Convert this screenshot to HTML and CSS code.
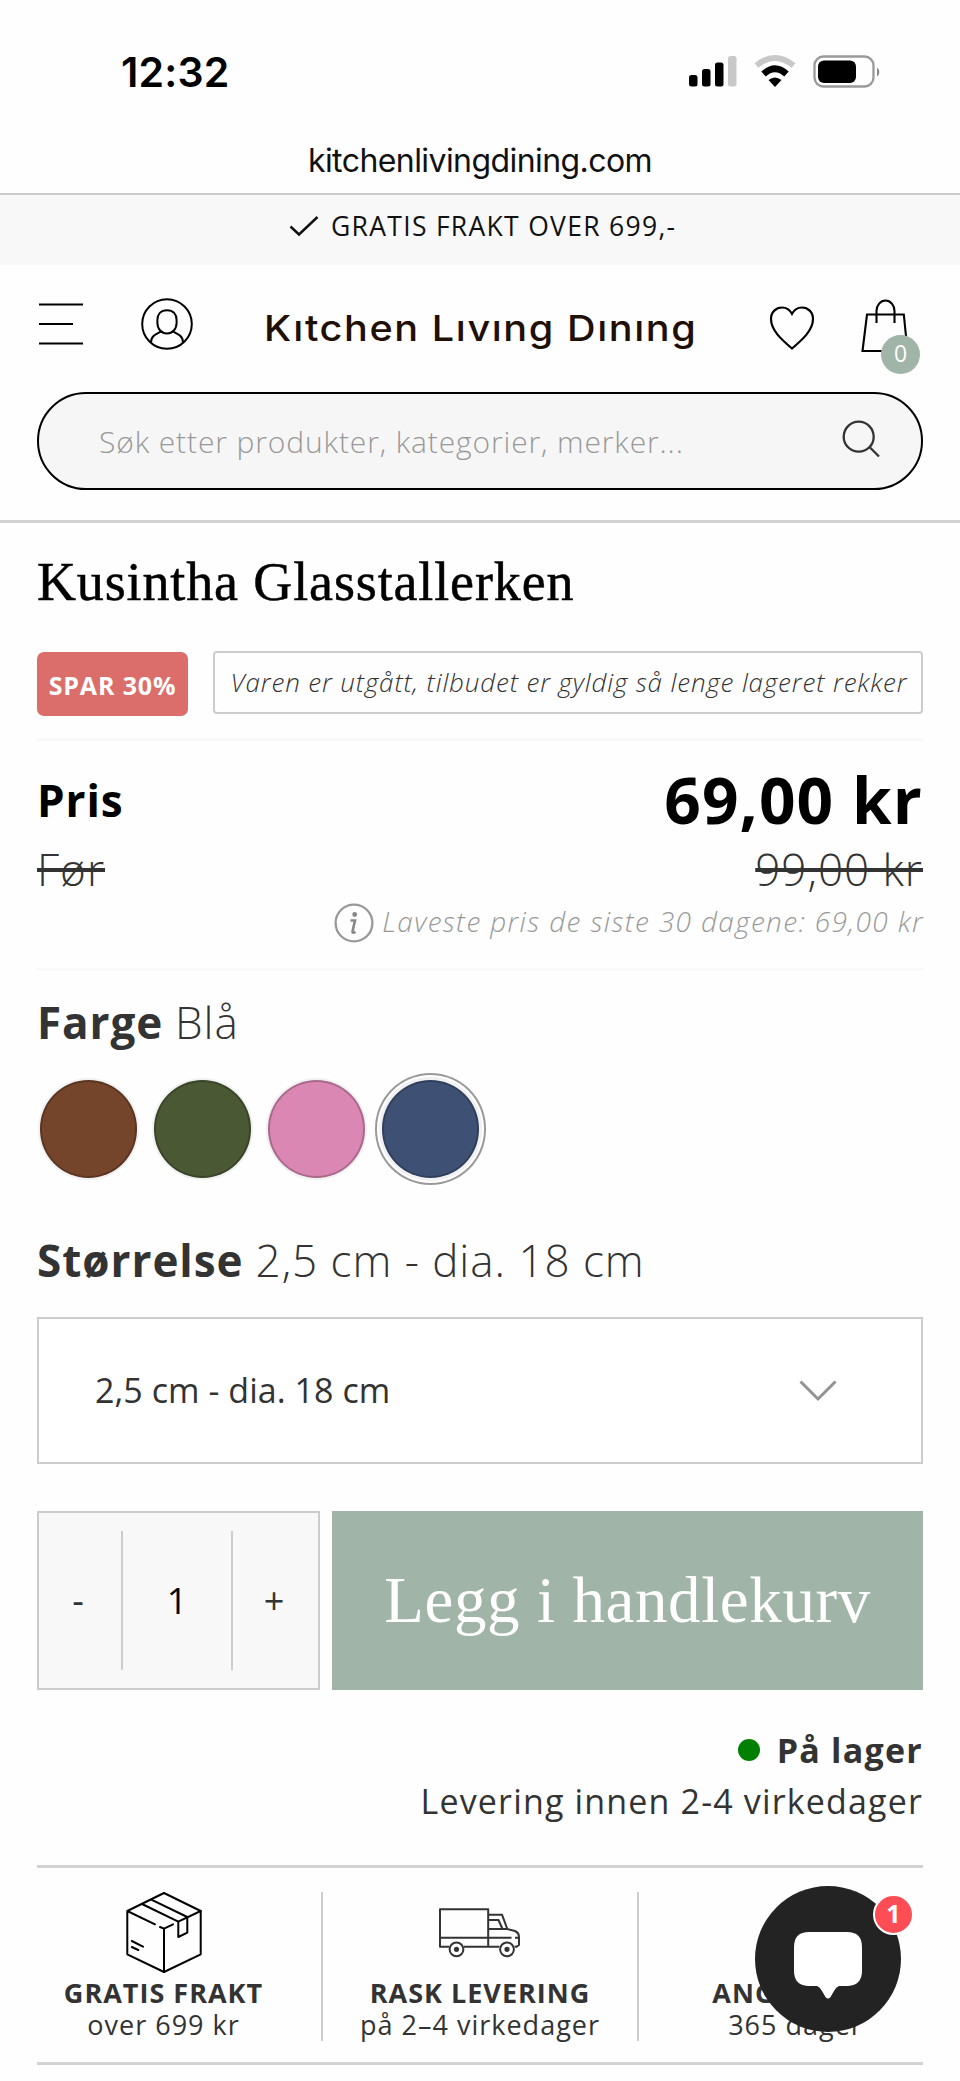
FILE: index.html
```html
<!DOCTYPE html>
<html lang="no">
<head>
<meta charset="utf-8">
<title>Kusintha Glasstallerken</title>
<link rel="stylesheet" href="styles.css">
</head>
<body>
<div class="status-bar">
  <span class="clock">12:32</span>
  <svg class="status-icons" width="204" height="36" viewBox="0 0 204 36">
    <rect x="0" y="18" width="8.5" height="11.5" rx="2.5"/>
    <rect x="13" y="12" width="8.5" height="17.5" rx="2.5"/>
    <rect x="26" y="5.5" width="8.5" height="24" rx="2.5"/>
    <rect x="39" y="-1" width="8.5" height="30.5" rx="2.5" fill="#c8c8c8"/>
    <path d="M67.500 8.500Q86 -6.500 104.500 8.500" fill="none" stroke="#c8c8c8" stroke-width="6"/>
    <path d="M74.500 17Q86 6.500 97.500 17" fill="none" stroke="#000" stroke-width="6.500"/>
    <path d="M86 30L79.500 23Q86 18 92.500 23Z"/>
    <rect x="125.5" y="-.5" width="59" height="30" rx="9" fill="none" stroke="#999" stroke-width="2.3"/>
    <rect x="129" y="3.500" width="38" height="22.500" rx="6"/>
    <path d="M188 10.500a5.500 5.500 0 0 1 0 9z" fill="#888"/>
  </svg>
</div>
<div class="url-bar">kitchenlivingdining.com</div>
<div class="promo">
  <svg width="30" height="22" viewBox="0 0 30 22"><path d="M1.500 11.500L10 19.500L28.500 2" fill="none" stroke="#111" stroke-width="2.500"/></svg>
  <span class="promo-text">GRATIS FRAKT OVER 699,-</span>
</div>

<header class="header">
  <div class="nav">
    <svg class="menu" width="44" height="42" viewBox="0 0 44 42"><path d="M0 1.500H44M0 21H34M0 40.500H44" stroke="#000" stroke-width="2.200"/></svg>
    <svg class="user" width="52" height="52" viewBox="0 0 52 52" fill="none" stroke="#000" stroke-width="2">
      <circle cx="26" cy="26" r="24.800"/>
      <path d="M26 12.200c-6.200 0-9.600 4-9.600 9.800v3c0 6 4.200 10.500 9.600 10.500s9.600-4.500 9.600-10.500v-3c0-5.800-3.400-9.800-9.600-9.800z"/>
      <path d="M10 44.500c0-6.500 5-8.500 10.500-11.300M42 44.500c0-6.500-5-8.500-10.500-11.300"/>
    </svg>
    <span class="logo">Kıtchen Lıvıng Dınıng</span>
    <svg class="heart" width="46" height="46" viewBox="0 0 46 46"><path d="M23 43.500C13 35 2 25.500 2 14C2 7 7 2.500 13 2.500C17.500 2.500 21 5 23 8.800C25 5 28.500 2.500 33 2.500C39 2.500 44 7 44 14C44 25.500 33 35 23 43.500Z" fill="none" stroke="#000" stroke-width="2.200"/></svg>
    <span class="bag">
      <svg width="48" height="54" viewBox="0 0 48 54" fill="none" stroke="#000" stroke-width="2.100"><path d="M6 15.500H42.800L46.500 52H1.500Z"/><path d="M15.500 24V12a9 10.500 0 0 1 18 0v12"/></svg>
      <span class="count">0</span>
    </span>
  </div>
  <div class="search">
    <span class="search-text">Søk etter produkter, kategorier, merker...</span>
    <svg width="38" height="38" viewBox="0 0 38 38" fill="none" stroke="#333" stroke-width="2.300"><circle cx="16.700" cy="16.700" r="15"/><path d="M27.500 27L37 36.500"/></svg>
  </div>
</header>

<main class="product">
  <h1 class="title">Kusintha Glasstallerken</h1>
  <div class="tags">
    <span class="save">SPAR 30%</span>
    <span class="notice">Varen er utgått, tilbudet er gyldig så lenge lageret rekker</span>
  </div>
  <section class="prices">
    <div class="row now"><b class="now-label">Pris</b><b class="now-value">69,00 kr</b></div>
    <div class="row before"><span class="strike">Før</span><span class="strike">99,00 kr</span></div>
    <div class="lowest">
      <svg width="40" height="40" viewBox="0 0 40 40"><circle cx="20" cy="20" r="18.400" fill="none" stroke="#999" stroke-width="2.300"/><circle cx="20.700" cy="11.500" r="2.400" fill="#888"/><path d="M16.500 17.500H21L18.500 28.500Q18.300 30.500 21.500 28.800" fill="none" stroke="#888" stroke-width="2.600"/></svg>
      <span class="lowest-text">Laveste pris de siste 30 dagene: 69,00 kr</span>
    </div>
  </section>
  <div class="option color-option"><b>Farge</b><span>Blå</span></div>
  <div class="swatches">
    <span class="swatch brown"></span><span class="swatch green"></span><span class="swatch pink"></span><span class="swatch blue selected"></span>
  </div>
  <div class="option size-option"><b>Størrelse</b><span>2,5 cm - dia. 18 cm</span></div>
  <div class="select">
    <span class="select-text">2,5 cm - dia. 18 cm</span>
    <svg width="38" height="22" viewBox="0 0 38 22"><path d="M1.500 1.500L19 19L36.500 1.500" fill="none" stroke="#929292" stroke-width="3"/></svg>
  </div>
  <div class="buy">
    <div class="qty"><span class="minus">-</span><span class="qty-value">1</span><span class="plus">+</span></div>
    <div class="add">Legg i handlekurv</div>
  </div>
  <div class="stock"><i class="dot"></i><b class="stock-text">På lager</b></div>
  <div class="delivery">Levering innen 2-4 virkedager</div>

  <section class="usps">
    <div class="usp">
      <svg width="80" height="84" viewBox="0 0 80 84" fill="none" stroke="#000" stroke-width="2" stroke-linecap="round" stroke-linejoin="round">
        <path d="M31 33.300L3.300 20L40 2L76.700 20V63.300L40 81L3.300 63.300V20"/>
        <path d="M36 36L40 37.700L49 33.300M40 37.700V81"/>
        <path d="M18 13L54.300 30.700V46L63.300 41.700V26L27.300 8.700M54.300 30.700L76.700 20"/>
        <path d="M7.800 50L19 55.700M7.800 56L14.300 59"/>
      </svg>
      <b>GRATIS FRAKT</b><span>over 699 kr</span>
    </div>
    <div class="usp">
      <svg width="84" height="84" viewBox="0 0 84 84" fill="none" stroke="#333" stroke-width="2" stroke-linejoin="round">
        <path d="M11 55.700H2V18.300H50.200V55.700M26 55.700H61.500M50.200 23.700H64L69.300 38L77 40Q81 42 81 46V54L78.500 55.700H76.500M50.200 29H60.500L64.500 38M50.200 38H69.300M2 46.700H73.500M77 46.700H81"/>
        <circle cx="18.500" cy="58.300" r="6.900"/><circle cx="18.500" cy="58.300" r="1.600" fill="#333"/>
        <circle cx="69" cy="58.300" r="6.900"/><circle cx="69" cy="58.300" r="1.600" fill="#333"/>
      </svg>
      <b>RASK LEVERING</b><span>på 2–4 virkedager</span>
    </div>
    <div class="usp">
      <div class="usp-blank"></div>
      <b>ANGRERETT</b><span>365 dager</span>
    </div>
  </section>
</main>

<div class="chat">
  <svg width="146" height="146" viewBox="0 0 146 146"><circle cx="73" cy="73" r="73" fill="#232323"/><path d="M54 46H92Q107 46 107 61V85Q107 99 93 100H84Q81 101 79 105L75.500 111Q73 114 70.500 111L67 105Q65 101 62 100H53Q39 99 39 85V61Q39 46 54 46Z" fill="#fff"/></svg>
  <span class="chat-count">1</span>
</div>
</body>
</html>
```
FILE: styles.css
```css
* { box-sizing: border-box; }
body {
  margin: 0;
  width: 960px;
  height: 2081px;
  position: relative;
  overflow: hidden;
  background: #fefefe;
  color: #333;
  font-family: "Open Sans", sans-serif;
  white-space: nowrap;
}
svg { display: block; flex: none; overflow: visible; }

.status-bar {
  height: 131px;
  padding: 13px 67px 0 121px;
  display: flex;
  align-items: center;
  justify-content: space-between;
  font-family: Inter, sans-serif;
  color: #000;
}
.clock { font-size: 41px; font-weight: 600; letter-spacing: 0.2px; }
.status-icons { margin-top: 5px; }
.url-bar {
  height: 62px;
  line-height: 60px;
  text-align: center;
  font-family: Inter, sans-serif;
  font-size: 32px;
  color: #111;
  letter-spacing: -0.57px;
}
.promo {
  height: 72px;
  padding: 0 0 8px 289px;
  display: flex;
  align-items: center;
  background: #f8f8f8;
  border-top: 2px solid #ccc;
  color: #111;
}
.promo-text { margin-left: 12px; font-size: 26.5px; letter-spacing: 1.3px; }

.header { height: 258px; border-bottom: 3px solid #d2d2d2; padding: 0 37px; }
.nav { height: 127px; display: flex; align-items: flex-start; padding-left: 2px; }
.menu { margin-top: 38px; }
.user { margin: 33px 0 0 58px; }
.logo {
  width: 440px;
  margin: 43px 0 0 71px;
  line-height: 40px;
  font-family: Inter, sans-serif;
  font-weight: 500;
  font-size: 36px;
  letter-spacing: 1.45px;
  color: #1f0f05;
  transform: scaleX(1.1);
  transform-origin: left;
}
.heart { margin: 40px 0 0 65px; }
.bag { position: relative; margin: 34px 0 0 46px; }
.count {
  position: absolute;
  left: 20px;
  top: 36px;
  width: 39px;
  height: 39px;
  border-radius: 50%;
  background: #a0b4a7;
  color: #fff;
  font-size: 23px;
  line-height: 37px;
  text-align: center;
}
.search {
  height: 98px;
  padding: 0 41px 0 60px;
  display: flex;
  align-items: center;
  justify-content: space-between;
  border: 2.5px solid #000;
  border-radius: 49px;
  background: #f6f6f6;
}
.search-text { font-size: 30px; font-weight: 300; letter-spacing: 0.87px; color: #999; }
.search svg { margin-top: -4px; }

.product { padding: 0 37px; }
.title {
  margin: 0;
  height: 128px;
  line-height: 119px;
  font-family: "Liberation Serif", serif;
  font-weight: 400;
  font-size: 54px;
  letter-spacing: 0.87px;
  -webkit-text-stroke: 0.5px #000;
  color: #000;
}
.tags { display: flex; align-items: flex-start; justify-content: space-between; height: 90px; border-bottom: 3px solid #f8f8f8; }
.save {
  width: 151px;
  height: 64px;
  margin-top: 1px;
  line-height: 66px;
  text-align: center;
  border-radius: 7px;
  background: #db6e6a;
  color: #fff;
  font-size: 25px;
  font-weight: 700;
  letter-spacing: 0.85px;
}
.notice {
  width: 710px;
  height: 63px;
  line-height: 59px;
  padding-left: 2px;
  text-align: center;
  border: 2px solid #ccc;
  border-radius: 4px;
  font-size: 26px;
  font-weight: 300;
  font-style: italic;
  letter-spacing: 0.85px;
}
.prices { height: 230px; padding-top: 24px; border-bottom: 3px solid #f8f8f8; }
.row { display: flex; justify-content: space-between; }
.now { height: 70px; line-height: 70px; color: #000; }
.now-label { font-size: 44px; letter-spacing: 0.9px; }
.now-value { font-size: 64px; letter-spacing: 1.1px; }
.before { height: 68px; line-height: 68px; font-size: 44px; font-weight: 300; letter-spacing: 1px; }
.strike { text-decoration: line-through; text-decoration-thickness: 4px; }
.lowest { height: 40px; display: flex; align-items: center; justify-content: flex-end; color: #999; }
.lowest-text { margin: -5px -1px 0 8px; font-size: 28px; font-weight: 300; font-style: italic; line-height: 36px; letter-spacing: 1.36px; }
.option { font-size: 44px; display: flex; gap: 12px; letter-spacing: 0.9px; }
.option span { font-weight: 300; }
.color-option { height: 102px; line-height: 102px; }
.swatches { height: 110px; display: flex; gap: 16.5px; padding: 7px 0 0 2.5px; }
.swatch { width: 97.5px; height: 97.5px; border-radius: 50%; border: 2px solid rgba(0,0,0,.22); box-shadow: 0 0 0 2px #f1f1f1; }
.brown { background-color: #75452b; }
.green { background-color: #4a5834; }
.pink { background-color: #da87b3; }
.blue { background-color: #3e5175; }
.selected { box-shadow: 0 0 0 3px #f1f1f4, 0 0 0 5px #fff, 0 0 0 7px #999; }
.size-option { height: 134px; padding-top: 20px; line-height: 114px; letter-spacing: 0.97px; }
.select {
  height: 147px;
  padding: 0 84px 0 56px;
  display: flex;
  align-items: center;
  justify-content: space-between;
  border: 2px solid #ccc;
  background: #fff;
}
.select-text { font-size: 34px; line-height: 50px; margin-top: -2px; letter-spacing: 0.05px; }
.buy { display: flex; gap: 12px; height: 179px; margin-top: 47px; }
.qty {
  width: 283px;
  display: grid;
  grid-template-columns: 82px 112px 1fr;
  padding: 18px 0;
  border: 2px solid #ccc;
  background: #f8f8f8;
  font-size: 36px;
  line-height: 139px;
  text-align: center;
}
.minus { padding-right: 4px; }
.plus { padding-right: 3px; }
.qty-value { border: 2px solid #ccc; border-width: 0 2px; color: #000; }
.add {
  flex: 1;
  line-height: 178px;
  text-align: center;
  background: #a0b4a7;
  color: #fff;
  font-family: "Liberation Serif", serif;
  font-size: 65px;
  letter-spacing: 0.6px;
}
.stock { height: 86px; padding-top: 33px; display: flex; align-items: center; justify-content: flex-end; }
.stock-text { font-size: 34px; line-height: 52px; margin-left: 17px; letter-spacing: 1.25px; }
.dot { width: 22px; height: 22px; border-radius: 50%; background: #008000; }
.delivery { height: 89px; text-align: right; font-size: 34px; line-height: 50px; letter-spacing: 1.16px; }
.usps {
  height: 200px;
  padding: 24px 0 25px;
  display: grid;
  grid-template-columns: 286px 316px 1fr;
  border: 3px solid #d2d2d2;
  border-width: 3px 0;
}
.usp { display: flex; flex-direction: column; align-items: center; border-right: 2px solid #ccc; font-size: 27px; line-height: 32px; letter-spacing: 1px; }
.usp:first-child { padding-right: 31px; }
.usp:last-child { border: 0; padding-left: 29px; }
.usp svg, .usp-blank { margin: -1px 0 2px; height: 84px; flex: none; }

.chat { position: absolute; left: 755px; top: 1886px; }
.chat-count {
  position: absolute;
  left: 118px;
  top: 8px;
  width: 41px;
  height: 41px;
  border: 2px solid #fff;
  border-radius: 50%;
  background: #ff4d55;
  color: #fff;
  font: 700 25px/35px "Open Sans", sans-serif;
  text-align: center;
}
```
